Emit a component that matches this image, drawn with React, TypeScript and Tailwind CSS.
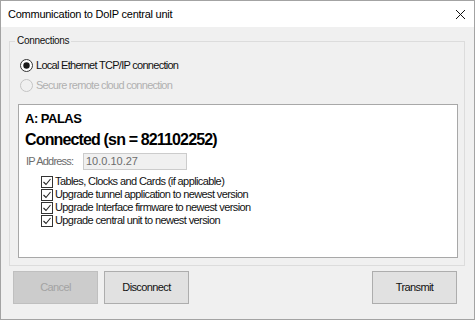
import React from "react";

function Check() {
  return (
    <svg width="12" height="12" viewBox="0 0 12 12" className="shrink-0">
      <rect x="0.5" y="0.5" width="11" height="11" fill="#ffffff" stroke="#333333" />
      <polyline points="2.5,6 5,8.5 9.5,3" fill="none" stroke="#222222" strokeWidth="1.1" />
    </svg>
  );
}

function Radio({ checked, disabled }: { checked?: boolean; disabled?: boolean }) {
  return (
    <svg width="13" height="13" viewBox="0 0 13 13" className="shrink-0">
      <circle cx="6.5" cy="6.5" r="6" fill={disabled ? "#f0f0f0" : "#ffffff"} stroke={disabled ? "#c4c4c4" : "#333333"} />
      {checked && <circle cx="6.5" cy="6.5" r="3.2" fill="#1a1a1a" />}
    </svg>
  );
}

const items = [
  "Tables, Clocks and Cards (if applicable)",
  "Upgrade tunnel application to newest version",
  "Upgrade Interface firmware to newest version",
  "Upgrade central unit to newest version",
];

export default function App() {
  return (
    <div className="w-[475px] h-[320px] bg-[#f0f0f0] border border-[#a3a3a3] flex flex-col font-['Liberation_Sans',Arial,sans-serif] text-[#000000] overflow-hidden">
      <div className="h-[26px] bg-white flex items-center justify-between pl-[7px] pr-[7px] shrink-0">
        <span className="text-[11px] tracking-[-0.25px] leading-[14px]">Communication to DoIP central unit</span>
        <svg width="11" height="11" viewBox="0 0 11 11" className="mr-[1px]">
          <line x1="1" y1="1" x2="10" y2="10" stroke="#111" strokeWidth="1" />
          <line x1="10" y1="1" x2="1" y2="10" stroke="#111" strokeWidth="1" />
        </svg>
      </div>
      <fieldset className="mt-[7px] ml-[8px] mr-[9px] border border-[#dcdcdc] px-0 pb-[7px]">
        <legend className="ml-[5px] px-[2px] text-[10px] leading-[14px] tracking-[-0.3px] text-[#111]">Connections</legend>
        <div className="flex items-center h-[14px] mt-[10px] pl-[10px]">
          <Radio checked />
          <span className="ml-[3px] text-[11px] tracking-[-0.72px] text-[#111]">Local Ethernet TCP/IP connection</span>
        </div>
        <div className="flex items-center h-[14px] mt-[6px] pl-[10px]">
          <Radio disabled />
          <span className="ml-[3px] text-[11px] tracking-[-0.72px] text-[#b0b0b0]">Secure remote cloud connection</span>
        </div>
        <div className="mt-[12px] ml-[8px] mr-[6px] h-[154px] bg-white border border-[#a8a8a8] pl-[6px] pt-[6px] flex flex-col">
          <div className="text-[13px] leading-[16px] font-bold tracking-[-0.5px]">A: PALAS</div>
          <div className="mt-[3px] text-[16px] leading-[20px] font-bold tracking-[-0.85px]">Connected (sn = 821102252)</div>
          <div className="mt-[3px] flex items-center h-[17px]">
            <span className="w-[58px] pl-[1px] text-[11px] tracking-[-0.8px] text-[#6d6d6d]">IP Address:</span>
            <div className="w-[104px] h-[17px] bg-[#f0f0f0] border border-[#cccccc] flex items-center pl-[2px] text-[11px] text-[#6d6d6d]">10.0.10.27</div>
          </div>
          <div className="mt-[5px] pl-[16px] flex flex-col">
            {items.map((t) => (
              <div key={t} className="flex items-center h-[13px]">
                <Check />
                <span className="ml-[2px] text-[11px] tracking-[-0.6px] text-[#111] whitespace-nowrap">{t}</span>
              </div>
            ))}
          </div>
        </div>
      </fieldset>
      <div className="mt-[5px] flex pl-[12px] pr-[17px]">
        <div className="w-[85px] h-[33px] bg-[#cccccc] border border-[#bfbfbf] flex items-center justify-center text-[11px] tracking-[-0.6px] text-[#a3a3a3]">Cancel</div>
        <div className="ml-[6px] w-[85px] h-[33px] bg-[#e1e1e1] border border-[#adadad] flex items-center justify-center text-[11px] tracking-[-0.6px] text-[#111]">Disconnect</div>
        <div className="ml-auto w-[85px] h-[33px] bg-[#e1e1e1] border border-[#adadad] flex items-center justify-center text-[11px] tracking-[-0.6px] text-[#111]">Transmit</div>
      </div>
    </div>
  );
}
